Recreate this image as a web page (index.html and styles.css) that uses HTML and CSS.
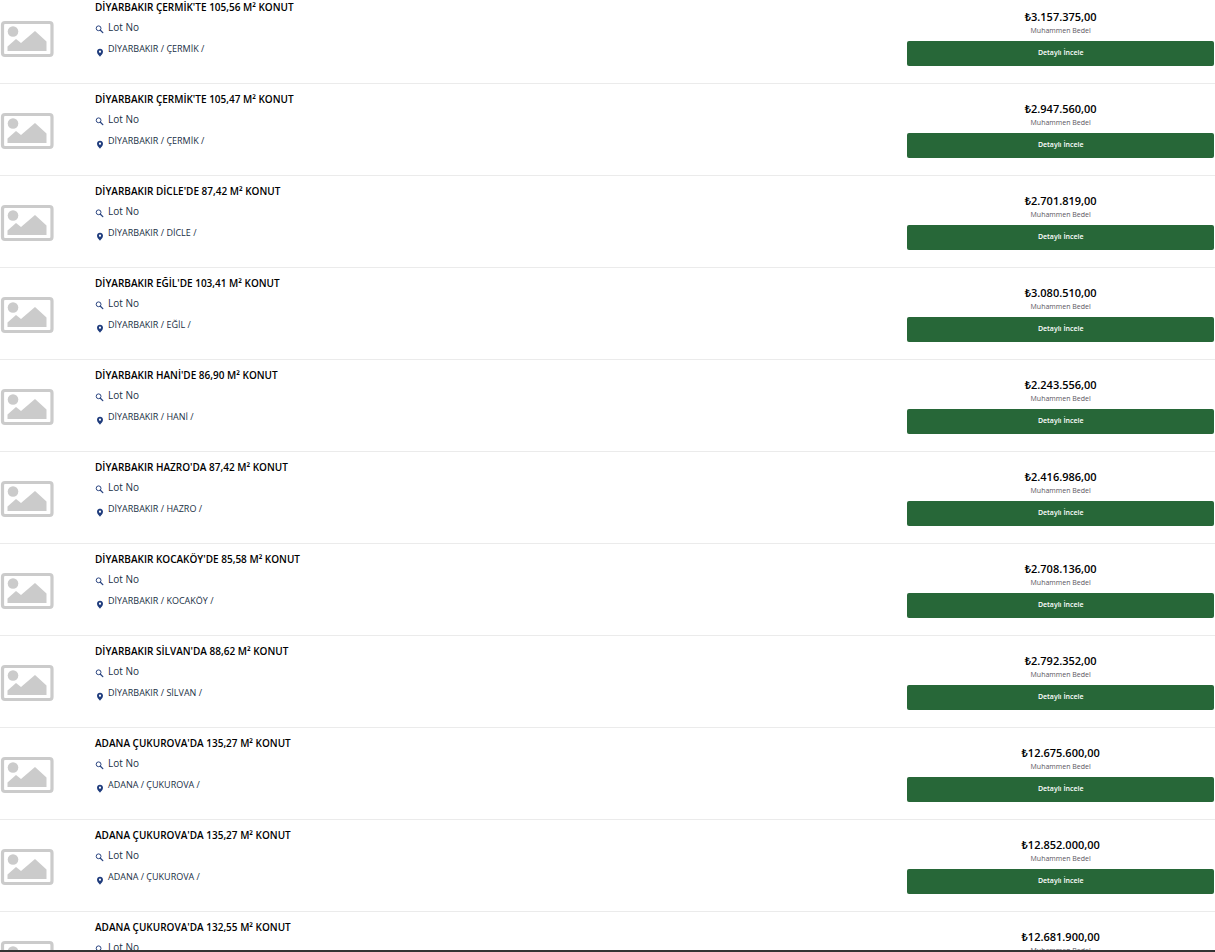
FILE: index.html
```
<!DOCTYPE html>
<html lang="tr">

<head>
    <meta charset="UTF-8">
    <title>Gayrimenkul Listesi</title>
    <link rel="stylesheet" href="styles.css">
    <script src="listings.js" defer></script>
</head>

<body>
    <svg class="sprite" aria-hidden="true">
        <symbol id="picture" viewBox="0 0 54 38">
            <rect x="2.5" y="2.5" width="49.5" height="33" rx="2.5" fill="none" stroke="#cbcbcb" stroke-width="3.2"/>
            <circle cx="13" cy="11.5" r="5.3" fill="#cbcbcb"/>
            <path d="M7.5 31V26.5L16 19L21 23L35 11L46.5 21.5V31Z" fill="#cbcbcb"/>
        </symbol>
        <symbol id="search" viewBox="0 0 9 9">
            <circle cx="3.6" cy="3.3" r="2.4" fill="none" stroke="#2b4580" stroke-width="1"/>
            <path d="M5.4 5.2L7.8 7.6" stroke="#2b4580" stroke-width="1.3" stroke-linecap="round"/>
        </symbol>
        <symbol id="pin" viewBox="0 0 9 9">
            <path fill-rule="evenodd" d="M5 .7C3.3 .7 2 2 2 3.7C2 5.7 3.8 7.2 5 8.7C6.2 7.2 8 5.7 8 3.7C8 2 6.7 .7 5 .7ZM5 2.6A1.1 1.1 0 1 1 5 4.8A1.1 1.1 0 1 1 5 2.6Z" fill="#1f3c7d"/>
        </symbol>
    </svg>
    <main class="listings" id="listings"></main>
    <footer class="bottom-bar"></footer>
</body>

</html>
```
FILE: styles.css
```
body {
    display: flex;
    flex-direction: column;
    height: 100vh;
    margin: 0;
    background-color: white;
    font-family: "Open Sans", "Noto Sans", sans-serif;
    overflow: hidden;
}
.sprite {
    display: none;
}
.listings {
    flex: 1;
    min-height: 0;
    overflow: hidden;
}
.listing {
    display: grid;
    grid-template-columns: 95px 1fr 25.4%;
    padding: 8px 0 17px;
    border-bottom: 1px solid #ebebeb;
}
.listing:first-child {
    padding-top: 0;
}
.thumb {
    display: block;
    width: 54px;
    height: 38px;
    margin-top: 20px;
}
.title {
    margin: 0 0 5px;
    font-size: 10px;
    line-height: 15px;
    font-weight: 600;
    color: black;
}
.detail {
    display: flex;
    gap: 4px;
    margin: 0 0 6px;
    font-size: 10px;
    line-height: 15px;
    color: #212f45;
}
.icon {
    width: 9px;
    height: 9px;
    margin-top: 5px;
}
.place {
    font-size: 9px;
}
.place .icon {
    margin-top: 7px;
}
.offer {
    padding: 9px 1px 0;
    text-align: center;
}
.price {
    margin: 0;
    font-size: 11px;
    line-height: 15px;
    font-weight: 600;
    color: black;
}
.price-label {
    margin: 0 0 3px;
    font-size: 7px;
    line-height: 14px;
    color: #5a5560;
}
.more {
    display: block;
    width: 100%;
    height: 25px;
    padding: 0 0 2px;
    border: none;
    border-radius: 2px;
    background-color: #276738;
    font-family: inherit;
    font-size: 7px;
    font-weight: 600;
    color: white;
    cursor: pointer;
}
.more:hover {
    background-color: #1e522c;
}
.bottom-bar {
    height: 2px;
    background-color: #343434;
}
```
FILE: listings.js
```
const listings = [
    ["DİYARBAKIR ÇERMİK'TE 105,56 M² KONUT", "DİYARBAKIR / ÇERMİK /", "3.157.375,00"],
    ["DİYARBAKIR ÇERMİK'TE 105,47 M² KONUT", "DİYARBAKIR / ÇERMİK /", "2.947.560,00"],
    ["DİYARBAKIR DİCLE'DE 87,42 M² KONUT", "DİYARBAKIR / DİCLE /", "2.701.819,00"],
    ["DİYARBAKIR EĞİL'DE 103,41 M² KONUT", "DİYARBAKIR / EĞİL /", "3.080.510,00"],
    ["DİYARBAKIR HANİ'DE 86,90 M² KONUT", "DİYARBAKIR / HANİ /", "2.243.556,00"],
    ["DİYARBAKIR HAZRO'DA 87,42 M² KONUT", "DİYARBAKIR / HAZRO /", "2.416.986,00"],
    ["DİYARBAKIR KOCAKÖY'DE 85,58 M² KONUT", "DİYARBAKIR / KOCAKÖY /", "2.708.136,00"],
    ["DİYARBAKIR SİLVAN'DA 88,62 M² KONUT", "DİYARBAKIR / SİLVAN /", "2.792.352,00"],
    ["ADANA ÇUKUROVA'DA 135,27 M² KONUT", "ADANA / ÇUKUROVA /", "12.675.600,00"],
    ["ADANA ÇUKUROVA'DA 135,27 M² KONUT", "ADANA / ÇUKUROVA /", "12.852.000,00"],
    ["ADANA ÇUKUROVA'DA 132,55 M² KONUT", "ADANA / ÇUKUROVA /", "12.681.900,00"]
];

document.getElementById('listings').innerHTML = listings.map(([title, place, price]) => `
    <article class="listing">
        <svg class="thumb" aria-hidden="true"><use href="#picture"/></svg>
        <div class="info">
            <h2 class="title">${title}</h2>
            <p class="detail"><svg class="icon" aria-hidden="true"><use href="#search"/></svg>Lot No</p>
            <p class="detail place"><svg class="icon" aria-hidden="true"><use href="#pin"/></svg>${place}</p>
        </div>
        <div class="offer">
            <p class="price">₺${price}</p>
            <p class="price-label">Muhammen Bedel</p>
            <button class="more">Detaylı İncele</button>
        </div>
    </article>`).join('');
```
